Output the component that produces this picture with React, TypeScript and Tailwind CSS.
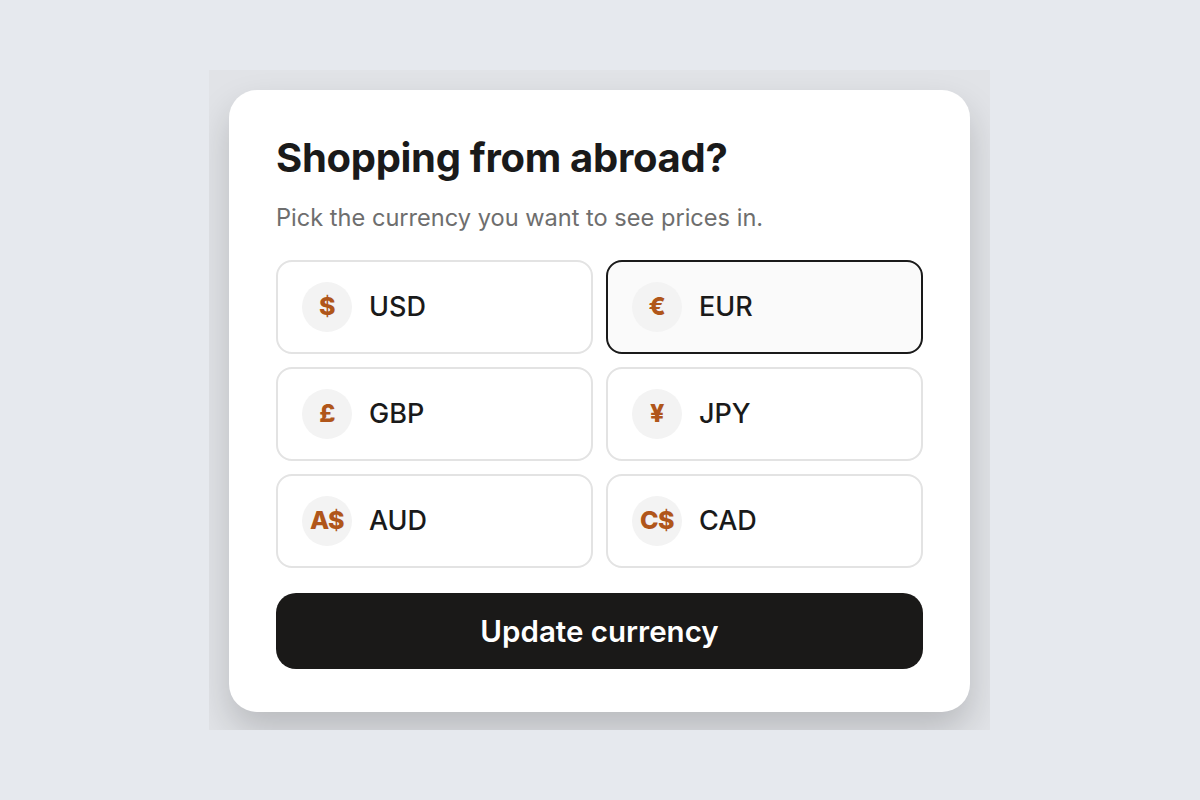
import React, { useState } from 'react';

const currencies = [
  { code: 'USD', symbol: '$' },
  { code: 'EUR', symbol: '€' },
  { code: 'GBP', symbol: '£' },
  { code: 'JPY', symbol: '¥' },
  { code: 'AUD', symbol: 'A$' },
  { code: 'CAD', symbol: 'C$' },
];

export default function App() {
  const [selected, setSelected] = useState('EUR');

  return (
    <div className="min-h-screen w-full bg-[#e6e9ee] flex items-center justify-center font-['Inter',sans-serif]">
      <div className="pt-5 pb-[18px] pl-5 pr-5 mr-[1px] overflow-hidden bg-[#e1e3e7]">
        <div className="w-[741px] bg-white rounded-[28px] pt-[44px] pb-[43px] px-[47px] shadow-[0_18px_36px_rgba(0,0,0,0.18)]">
          <h1 className="text-[40px] leading-[48px] font-bold text-[#1a1a1a] tracking-[-0.3px]">Shopping from abroad?</h1>
          <p className="mt-[21px] text-[23.6px] leading-[30px] text-[#6e6e6e]">Pick the currency you want to see prices in.</p>

          <div className="mt-[27px] grid grid-cols-2 gap-x-[13px] gap-y-[13px]">
            {currencies.map((c) => {
              const active = c.code === selected;
              return (
                <button
                  key={c.code}
                  onClick={() => setSelected(c.code)}
                  className={
                    active
                      ? 'h-[94px] flex items-center gap-[17px] px-[24px] rounded-[16px] border-2 border-[#1a1a1a] bg-[#fafafa] text-left'
                      : 'h-[94px] flex items-center gap-[17px] px-[24px] rounded-[16px] border-2 border-[#e3e3e3] bg-white text-left'
                  }
                >
                  <span className="w-[50px] h-[50px] shrink-0 rounded-full bg-[#f3f3f3] flex items-center justify-center text-[25px] font-extrabold tracking-[-0.5px] text-[#b0561a]">
                    {c.symbol}
                  </span>
                  <span className="text-[27px] font-medium text-[#1a1a1a]">{c.code}</span>
                </button>
              );
            })}
          </div>

          <button className="mt-[25px] w-full h-[76px] rounded-[20px] bg-[#1a1918] text-white text-[29.5px] font-semibold">
            Update currency
          </button>
        </div>
      </div>
    </div>
  );
}
